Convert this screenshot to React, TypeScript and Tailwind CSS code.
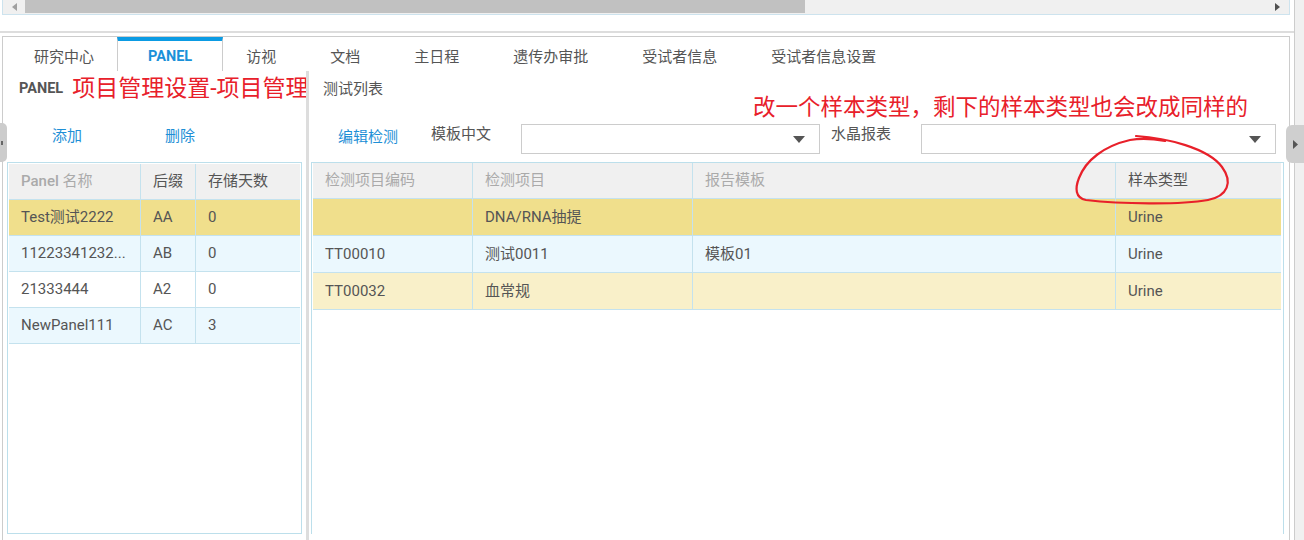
import React from "react"

const tabs = ["研究中心", "PANEL", "访视", "文档", "主日程", "遗传办审批", "受试者信息", "受试者信息设置"]

const panels = [
  { name: "Test测试2222", suffix: "AA", days: "0", bg: "bg-[#f0df8c]" },
  { name: "11223341232...", suffix: "AB", days: "0", bg: "bg-[#ebf8fe]" },
  { name: "21333444", suffix: "A2", days: "0", bg: "bg-white" },
  { name: "NewPanel111", suffix: "AC", days: "3", bg: "bg-[#ebf8fe]" },
]

const tests = [
  { code: "", item: "DNA/RNA抽提", tpl: "", type: "Urine", bg: "bg-[#f0df8c]" },
  { code: "TT00010", item: "测试0011", tpl: "模板01", type: "Urine", bg: "bg-[#ebf8fe]" },
  { code: "TT00032", item: "血常规", tpl: "", type: "Urine", bg: "bg-[#f9f0c9]" },
]

function Caret() {
  return (
    <svg width="12" height="7" viewBox="0 0 12 7">
      <path d="M0 0 H12 L6 7 Z" fill="#555" />
    </svg>
  )
}

function Select({ width }: { width: string }) {
  return (
    <div className={`${width} h-[30px] mt-[6px] border border-[#cccccc] bg-white flex items-center justify-end pr-[14px]`}>
      <Caret />
    </div>
  )
}

export default function App() {
  return (
    <div className="relative w-[1304px] h-[540px] overflow-hidden bg-white flex text-[#555] font-[Roboto,'Noto_Sans_CJK_SC',sans-serif]">
      <div className="w-[1294px] flex flex-col">
        {/* horizontal scrollbar */}
        <div className="ml-[2px] w-[1288px] h-[15px] bg-[#f0f0f0] border-l border-r border-b border-[#cde3ee] flex items-start">
          <div className="w-[22px] h-[13px] flex items-center justify-center">
            <svg width="5" height="8" viewBox="0 0 5 8">
              <path d="M5 0 V8 L0 4 Z" fill="#a0a0a0" />
            </svg>
          </div>
          <div className="w-[780px] h-[13px] bg-[#c1c1c1]" />
          <div className="flex-1" />
          <div className="w-[14px] h-[13px] flex items-center justify-start">
            <svg width="5" height="8" viewBox="0 0 5 8">
              <path d="M0 0 V8 L5 4 Z" fill="#505050" />
            </svg>
          </div>
        </div>
        <div className="h-[16px]" />
        <div className="h-[2px] bg-[#dddddd]" />
        <div className="h-[3px]" />

        {/* main box */}
        <div className="ml-[2px] w-[1288px] flex-1 border border-[#cccccc] border-b-0 flex flex-col">
          <div className="h-[34px] flex ml-[4px]">
            {tabs.map((t, i) =>
              i === 1 ? (
                <div
                  key={t}
                  className="-mx-[4px] px-[30px] pt-[2px] border-l border-r border-[#cccccc] border-t-[4px] border-t-[#0b9be3] flex items-center text-[14.5px] font-bold text-[#1a91d9]"
                >
                  {t}
                </div>
              ) : (
                <div key={t} className="px-[27px] pt-[7px] flex items-center text-[15px] text-[#555]">
                  {t}
                </div>
              )
            )}
          </div>

          <div className="flex-1 flex">
            {/* left panel */}
            <div className="w-[303px] flex flex-col">
              <div className="h-[36px] flex items-center pl-[16px]">
                <span className="text-[14.5px] font-bold text-[#555]">PANEL</span>
                <span className="ml-[9px] text-[23px] leading-[24px] text-[#e8202a] whitespace-nowrap">项目管理设置-项目管理</span>
              </div>
              <div className="mt-[11px] h-[36px] flex items-center pl-[49px] text-[15px] text-[#1e8fd6]">
                <span>添加</span>
                <span className="ml-[83px]">删除</span>
              </div>
              <div className="mt-[8px] ml-[4px] w-[295px] h-[372px] border border-[#bcdfeb] p-px">
                <div className="flex h-[36px] bg-[#f0f0f0] border-b border-[#c4e2ee] text-[15px]">
                  <div className="w-[132px] pl-[12px] flex items-center border-r border-[#c4e2ee] text-[#aaaaaa]">
                    <span className="font-medium">Panel</span>&nbsp;名称
                  </div>
                  <div className="w-[55px] pl-[12px] flex items-center border-r border-[#c4e2ee]">后缀</div>
                  <div className="flex-1 pl-[12px] flex items-center">存储天数</div>
                </div>
                {panels.map((p) => (
                  <div key={p.name} className={`flex h-[36px] border-b border-[#c4e2ee] text-[15px] ${p.bg}`}>
                    <div className="w-[132px] pl-[12px] flex items-center border-r border-[#c4e2ee] whitespace-nowrap">{p.name}</div>
                    <div className="w-[55px] pl-[12px] flex items-center border-r border-[#c4e2ee]">{p.suffix}</div>
                    <div className="flex-1 pl-[12px] flex items-center">{p.days}</div>
                  </div>
                ))}
              </div>
            </div>

            {/* splitter */}
            <div className="w-[3px] bg-[#dddddd]" />

            {/* right panel */}
            <div className="flex-1 flex flex-col">
              <div className="h-[36px] flex items-center pl-[14px] text-[15px]">测试列表</div>
              <div className="mt-[11px] h-[36px] flex items-start text-[15px]">
                <span className="ml-[29px] mt-[9px] leading-[20px] text-[#1e8fd6]">编辑检测</span>
                <span className="ml-[33px] mt-[6px] leading-[20px]">模板中文</span>
                <div className="ml-[30px]">
                  <Select width="w-[299px]" />
                </div>
                <span className="ml-[11px] mt-[6px] leading-[20px]">水晶报表</span>
                <div className="ml-[30px]">
                  <Select width="w-[355px]" />
                </div>
              </div>
              <div className="mt-[8px] ml-[2px] w-[973px] h-[372px] border-l border-r border-t border-[#bcdfeb] pl-px pr-[2px]">
                <div className="flex h-[36px] bg-[#f0f0f0] border-b border-[#c4e2ee] text-[15px] text-[#aaaaaa]">
                  <div className="w-[160px] pl-[12px] flex items-center border-r border-[#c4e2ee]">检测项目编码</div>
                  <div className="w-[220px] pl-[12px] flex items-center border-r border-[#c4e2ee]">检测项目</div>
                  <div className="w-[423px] pl-[12px] flex items-center border-r border-[#c4e2ee]">报告模板</div>
                  <div className="flex-1 pl-[12px] flex items-center text-[#555]">样本类型</div>
                </div>
                {tests.map((r) => (
                  <div key={r.item} className={`flex h-[37px] border-b border-[#c4e2ee] text-[15px] ${r.bg}`}>
                    <div className="w-[160px] pl-[12px] flex items-center border-r border-[#c4e2ee]">{r.code}</div>
                    <div className="w-[220px] pl-[12px] flex items-center border-r border-[#c4e2ee]">{r.item}</div>
                    <div className="w-[423px] pl-[12px] flex items-center border-r border-[#c4e2ee]">{r.tpl}</div>
                    <div className="flex-1 pl-[12px] flex items-center">{r.type}</div>
                  </div>
                ))}
              </div>
            </div>
          </div>
        </div>
      </div>

      {/* page scrollbar strip */}
      <div className="w-[10px] border-l border-[#cccccc] bg-[#f0f0f0]" />

      {/* collapse handles */}
      <div className="absolute left-0 top-[123px] w-[7px] h-[39px] rounded-r-[5px] bg-[#cccccc] flex items-center">
        <div className="w-[2px] h-[4px] bg-[#666] ml-[1px]" />
      </div>
      <div className="absolute left-[1286px] top-[125px] w-[18px] h-[38px] rounded-l-[6px] bg-[#cfcfcf] flex items-center justify-center">
        <svg width="5" height="9" viewBox="0 0 5 9">
          <path d="M0 0 V9 L5 4.5 Z" fill="#555" />
        </svg>
      </div>

      {/* annotation */}
      <div className="absolute left-[753px] top-[95px] text-[22.5px] leading-[24px] text-[#e8202a] whitespace-nowrap">
        改一个样本类型，剩下的样本类型也会改成同样的
      </div>
      <svg className="absolute left-[1070px] top-[130px]" width="170" height="80" viewBox="0 0 170 80">
        <path
          d="M66 6 C97 8 138 18 152 37 C163 52 158 66 138 70 C110 75 50 74 16 70 C5 68 5 58 9 48 C16 30 34 16 60 10 C72 8 84 9 95 11"
          fill="none"
          stroke="#e8202a"
          strokeWidth="2.2"
          strokeLinecap="round"
        />
      </svg>
    </div>
  )
}
